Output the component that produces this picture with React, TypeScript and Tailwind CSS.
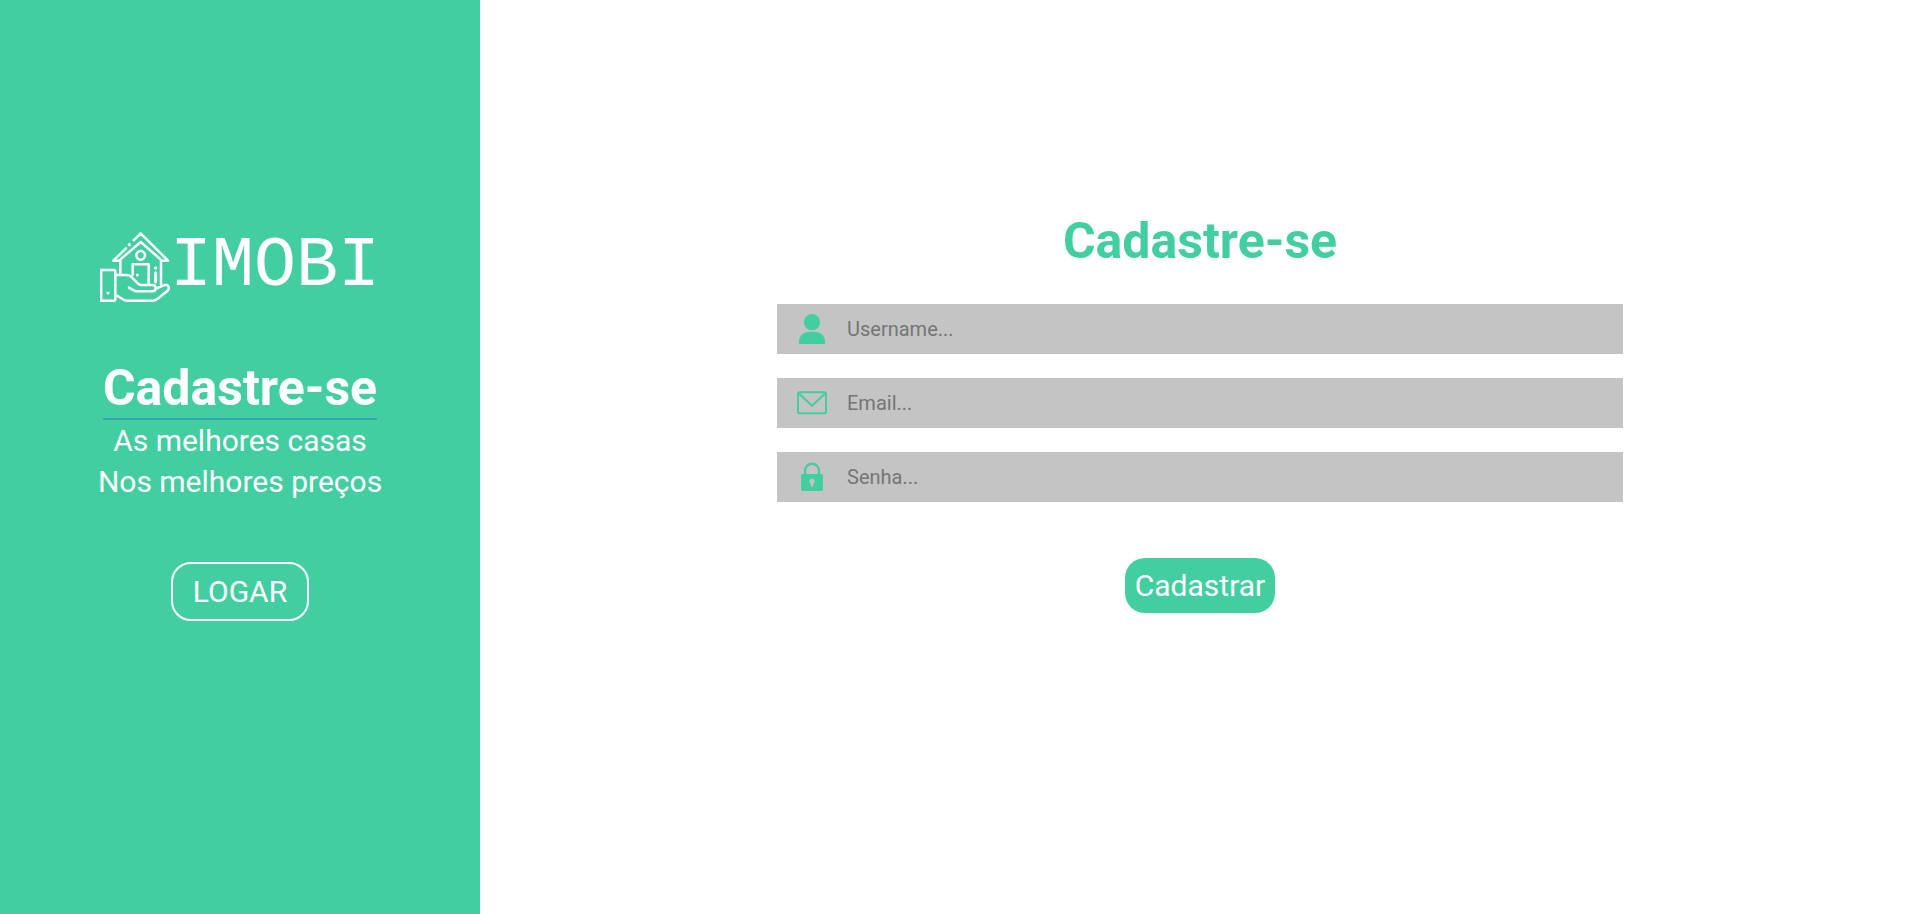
import type { ReactNode } from "react";

function HouseInHandLogo() {
  return (
    <svg
      className="size-[70px] shrink-0"
      viewBox="30 36 210 210"
      fill="none"
      stroke="white"
      strokeWidth="7.5"
      strokeLinecap="round"
      strokeLinejoin="round"
      aria-hidden="true"
    >
      <path d="M131 61 152 40 234 122H216L152 66 87 122H70L108 85" />
      <path d="M91 123V162M213 123V193" />
      <circle cx="152" cy="106" r="13" />
      <path d="M128 164V133H176V193" />
      <path d="M197 158V186" strokeWidth="9" />
      <rect x="33" y="150" width="43" height="92" rx="5" />
      <path d="M33 150V242" strokeLinecap="square" />
      <path d="M78 165H110C116 165 119 166 123 170L144 191C147 194 149 195 153 195H188C194 195 197 199 197 204C197 210 194 214 188 214H140C136 214 134 213 131 211L117 203" />
      <path d="M198 206 221 196C228 193 234 195 236 200C238 206 236 209 232 213L203 236C198 240 194 242 187 242H111C105 242 101 240 97 237L78 225" />
      <g fill="white" stroke="none">
        <circle cx="118" cy="74" r="5" />
        <circle cx="142" cy="165" r="4.5" />
        <circle cx="197" cy="144" r="5" />
        <circle cx="54" cy="219" r="4.5" />
      </g>
    </svg>
  );
}

function UserIcon() {
  return (
    <svg className="size-[30px] shrink-0" viewBox="0 0 90 90" fill="#42cea0" aria-hidden="true">
      <circle cx="45" cy="24.5" r="24.5" />
      <path d="M6 90V84C6 65 20 53 38 53H52C70 53 84 65 84 84V90Z" />
    </svg>
  );
}

function MailIcon() {
  return (
    <svg
      className="size-[30px] shrink-0"
      viewBox="0 0 90 90"
      fill="none"
      stroke="#42cea0"
      strokeWidth="6"
      strokeLinejoin="round"
      aria-hidden="true"
    >
      <rect x="3" y="13" width="84" height="63" rx="3" />
      <path d="M5 16 45 53 85 16" />
    </svg>
  );
}

function LockIcon() {
  return (
    <svg className="size-[30px] shrink-0" viewBox="0 0 90 90" aria-hidden="true">
      <path d="M24 38V27C24 -2 66 -2 66 27V38" fill="none" stroke="#42cea0" strokeWidth="7" />
      <path
        fill="#42cea0"
        fillRule="evenodd"
        d="M17 36H73Q78 36 78 41V82Q78 87 73 87H17Q12 87 12 82V41Q12 36 17 36ZM45 50A8 8 0 0 0 41 65V70Q41 74 45 74T49 70V65A8 8 0 0 0 45 50Z"
      />
    </svg>
  );
}

type FieldProps = {
  id: string;
  type: string;
  label: string;
  icon: ReactNode;
};

function Field({ id, type, label, icon }: FieldProps) {
  return (
    <div className="flex h-[50px] items-center gap-5 bg-[#c4c4c4] px-5">
      <label htmlFor={id} aria-label={label}>
        {icon}
      </label>
      <input
        id={id}
        name={id}
        type={type}
        placeholder={`${label}...`}
        className="min-w-0 flex-1 bg-transparent text-xl text-gray-800 outline-none placeholder:text-[#757575]"
      />
    </div>
  );
}

export default function App() {
  return (
    <div className="flex min-h-screen bg-white font-[Roboto,sans-serif]">
      <aside className="flex w-1/4 flex-col items-center justify-center bg-[#42cea0] pb-[61px] text-white">
        <div className="flex h-[70px] items-center">
          <HouseInHandLogo />
          <span className="font-['Liberation_Mono',monospace] text-[70px] leading-[70px]">IMOBI</span>
        </div>
        <h2 className="mt-[57px] border-b-2 border-[#35a4b5] text-[50px] leading-[59px] font-bold">Cadastre-se</h2>
        <p className="text-center text-3xl leading-[41px]">
          As melhores casas
          <br />
          Nos melhores preços
        </p>
        <button
          type="button"
          className="mt-[60px] rounded-[20px] border-2 border-white px-5 py-[10px] text-3xl leading-[35px]"
        >
          LOGAR
        </button>
      </aside>
      <main className="flex flex-1 flex-col items-center justify-center pb-[89px]">
        <h1 className="text-[50px] leading-[59px] font-bold text-[#42cea0]">Cadastre-se</h1>
        <form className="mt-[33px] flex w-[58.75%] flex-col gap-6" onSubmit={(event) => event.preventDefault()}>
          <Field id="username" type="text" label="Username" icon={<UserIcon />} />
          <Field id="email" type="email" label="Email" icon={<MailIcon />} />
          <Field id="password" type="password" label="Senha" icon={<LockIcon />} />
          <button
            type="submit"
            className="mt-8 self-center rounded-[20px] bg-[#42cea0] p-[10px] text-3xl leading-[35px] text-white"
          >
            Cadastrar
          </button>
        </form>
      </main>
    </div>
  );
}
